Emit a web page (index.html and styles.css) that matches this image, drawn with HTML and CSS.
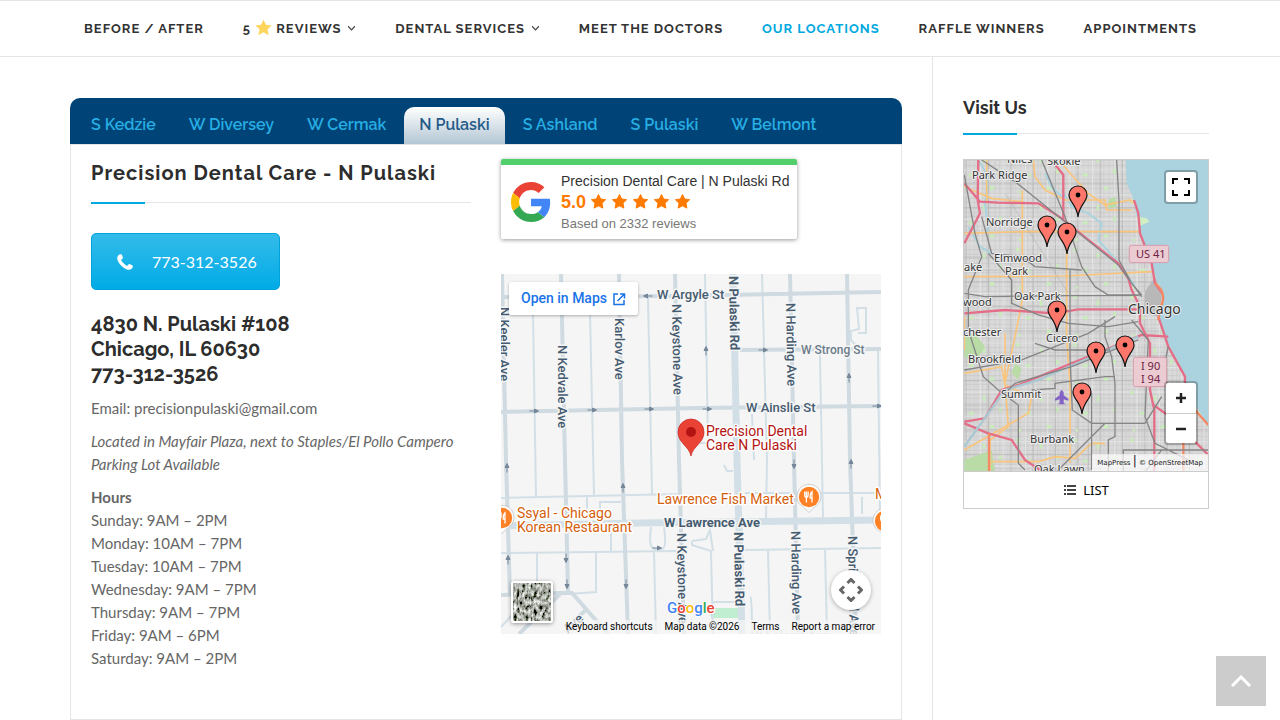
FILE: index.html
```html
<!DOCTYPE html>
<html lang="en">
<head>
<meta charset="utf-8">
<meta name="viewport" content="width=device-width, initial-scale=1">
<title>Precision Dental Care - Our Locations</title>
<link rel="stylesheet" href="styles.css">
</head>
<body>
<header class="site-header">
  <nav class="main-nav" aria-label="Main">
    <a href="#">Before / After</a>
    <a href="#">5 <svg class="nav-star" viewBox="0 0 16 16" aria-hidden="true"><path d="M8 0.6 10.3 5.5 15.7 6 11.7 9.7 12.9 15.2 8 12.4 3.1 15.2 4.3 9.7 0.3 6 5.7 5.5Z" fill="#fdd45c"/></svg> Reviews<svg class="caret" viewBox="0 0 8 6" aria-hidden="true"><path d="M1 1 4 4.2 7 1"/></svg></a>
    <a href="#">Dental Services<svg class="caret" viewBox="0 0 8 6" aria-hidden="true"><path d="M1 1 4 4.2 7 1"/></svg></a>
    <a href="#">Meet the Doctors</a>
    <a href="#" class="current">Our Locations</a>
    <a href="#">Raffle Winners</a>
    <a href="#">Appointments</a>
  </nav>
</header>

<div class="page">
  <main class="content">
    <div class="tabs" role="tablist">
      <button role="tab">S Kedzie</button>
      <button role="tab">W Diversey</button>
      <button role="tab">W Cermak</button>
      <button role="tab" class="active" aria-selected="true">N Pulaski</button>
      <button role="tab">S Ashland</button>
      <button role="tab">S Pulaski</button>
      <button role="tab">W Belmont</button>
    </div>
    <section class="panel" role="tabpanel">
      <div class="details">
        <h2 class="ruled location-title">Precision Dental Care - N Pulaski</h2>
        <a class="call" href="tel:7733123526">
          <svg viewBox="0 0 16 16" aria-hidden="true"><path d="M1.2 1.4C2 .5 3.600 0 4.300 .3 4.900.6 6 3.200 5.900 3.900 5.800 4.700 4.300 5.400 4.200 5.900 4.100 7 8.800 11.800 10.100 11.800 10.700 11.800 11.400 10.200 12.200 10.100 12.900 10 15.500 11.400 15.800 12 16.100 12.700 15.300 14.400 14.500 15 13.400 15.900 11.600 16.100 9.900 15.400 6 13.900 2 9.900.6 6.200 0 4.300.2 2.500 1.200 1.400Z" fill="#fff"/></svg>
          <span>773-312-3526</span>
        </a>
        <h3 class="address">4830 N. Pulaski #108<br>Chicago, IL 60630<br>773-312-3526</h3>
        <p>Email: precisionpulaski@gmail.com</p>
        <p><em>Located in Mayfair Plaza, next to Staples/El Pollo Campero Parking Lot Available</em></p>
        <p><strong>Hours</strong><br>Sunday: 9AM – 2PM<br>Monday: 10AM – 7PM<br>Tuesday: 10AM – 7PM<br>Wednesday: 9AM – 7PM<br>Thursday: 9AM – 7PM<br>Friday: 9AM – 6PM<br>Saturday: 9AM – 2PM</p>
      </div>

      <div class="aside-info">
        <div class="reviews">
          <svg class="g-logo" viewBox="0 0 48 48" aria-hidden="true">
            <path fill="#ea4335" d="M24 9.500c3.540 0 6.710 1.220 9.210 3.600l6.850-6.850C35.900 2.380 30.470 0 24 0 14.620 0 6.510 5.380 2.560 13.220l7.980 6.190C12.430 13.720 17.740 9.500 24 9.500z"/>
            <path fill="#4285f4" d="M46.980 24.550c0-1.570-.15-3.090-.38-4.550H24v9.020h12.940c-.58 2.960-2.260 5.480-4.780 7.180l7.730 6c4.510-4.180 7.090-10.360 7.090-17.650z"/>
            <path fill="#fbbc05" d="M10.530 28.590c-.48-1.450-.76-2.990-.76-4.590s.27-3.140.76-4.590l-7.980-6.190C.92 16.460 0 20.120 0 24c0 3.880.92 7.540 2.560 10.780l7.970-6.190z"/>
            <path fill="#34a853" d="M24 48c6.480 0 11.930-2.130 15.890-5.810l-7.730-6c-2.150 1.450-4.920 2.300-8.160 2.300-6.260 0-11.570-4.220-13.470-9.910l-7.980 6.190C6.510 42.620 14.620 48 24 48z"/>
          </svg>
          <div class="reviews-text">
            <div class="reviews-name">Precision Dental Care | N Pulaski Rd</div>
            <div class="rating"><b>5.0</b>
              <svg viewBox="0 0 101 17" aria-label="5 stars">
                <defs><path id="star" d="M8.500 1.500 10.700 6 15.600 6.700 12 10.200 12.900 15.100 8.500 12.800 4.100 15.100 5 10.200 1.400 6.700 6.300 6Z" fill="#ff7a00" stroke="#ff7a00" stroke-linejoin="round"/></defs>
                <use href="#star"/><use href="#star" x="21"/><use href="#star" x="42"/><use href="#star" x="63"/><use href="#star" x="84"/>
              </svg>
            </div>
            <div class="reviews-count">Based on 2332 reviews</div>
          </div>
        </div>

        <div class="street-map">
          <svg class="map-art" viewBox="501 274 380 360" preserveAspectRatio="xMidYMid slice">
            <defs>
              <g id="arrow"><path d="M-4.500 0H3M.5-2 4.500 0 .5 2Z" stroke="#76879a" stroke-width="1" fill="#76879a"/></g>
              <g id="food"><path d="M0 15.500-5.500 10A12 12 0 1 1 5.500 10Z" fill="#fff" stroke="#b7b7b7" stroke-width=".7"/><circle r="10.200" fill="#ff8126"/><path d="M-4.300-5.500V-2Q-4.300.2-2.600.2V5.500M-2.600-5.500V0M-.9-5.500V-2Q-.9.2-2.600.2M3 5.500V-5.200Q.8-3 1.200 1H3" stroke="#fff" stroke-width="1.300" fill="none"/></g>
              <filter id="aerial" x="0" y="0" width="100%" height="100%"><feTurbulence type="fractalNoise" baseFrequency=".35 .2" numOctaves="3" seed="5"/><feColorMatrix values="1.500 .8 0 0 -.76  1.500 .8 0 0 -.74  1.500 .8 0 0 -.78  0 0 0 0 1"/></filter>
            </defs>
            <path fill="#f5f5f5" d="M501 274h380v360H501z"/>
            <path d="M709 608h30v10h-28z" fill="#bfeed1"/>
            <g fill="none" stroke="#d3dfe6" stroke-width="2">
              <path d="M533 313 536 497M537 553V582M590 313 594 495M648 298 652 494M654 552 656 634M705 274 708 443M762 274 767 460 766 518M768 550 770 634M820 355 823 519M825 550 827 634M878 350 880 519M752 414 754 460M700 443H710M501 498 680 494M745 493H875M587 497V515M600 520V502H621M501 553 680 551M741 550 881 548M611 528V553M651 527Q648 549 655 549H662Q667 548 664 527M692 541 706 539 710 530 713 551M692 541V545L711 551 713 634M713 602H740M750 597Q752 596 752 634M596 553V592L568 594M862 497V514M724 465 727 471H733M858 333H866V308H857L859 329 851 331V340L858 348M501 627 512 615"/>
            </g>
            <g fill="none" stroke="#cfdae1" stroke-width="4">
              <path d="M501 297 680 296 881 292M740 350 881 349M501 412 700 408 881 406M502 274 506 460 510 595M561 274 565 460 568 593M619 274 622 460 628 634M675 274 679 460 684 634M790 274 794 460 798 634M847 274 850 460 856 634M501 595 560 593H572L608 634M560 594 519 634M588 608 566 628"/>
            </g>
            <g fill="none" stroke="#d3dfe6" stroke-width="7"><path d="M733 274 737 460 742 634M501 526 640 523 881 520"/></g>
            <g>
              <use href="#arrow" x="534" y="411"/><use href="#arrow" x="592" y="410"/><use href="#arrow" x="649" y="409"/><use href="#arrow" x="707" y="409"/><use href="#arrow" x="763" y="350"/><use href="#arrow" x="877" y="406"/><use href="#arrow" x="657" y="548"/><use href="#arrow" transform="translate(648 296) rotate(180)"/>
              <use href="#arrow" transform="translate(706 351) rotate(-90)"/><use href="#arrow" transform="translate(849 378) rotate(-90)"/><use href="#arrow" transform="translate(507 468) rotate(-90)"/><use href="#arrow" transform="translate(623 488) rotate(-90)"/><use href="#arrow" transform="translate(508 560) rotate(-90)"/><use href="#arrow" transform="translate(851 464) rotate(-90)"/>
              <use href="#arrow" transform="translate(566 558) rotate(90)"/><use href="#arrow" transform="translate(567 584) rotate(90)"/><use href="#arrow" transform="translate(626 584) rotate(90)"/><use href="#arrow" transform="translate(794 464) rotate(90)"/>
            </g>
            <g class="street-label">
              <text x="657" y="299">W Argyle St</text>
              <text x="801" y="354" class="faint">W Strong St</text>
              <text x="746" y="412">W Ainslie St</text>
              <text x="664" y="527" class="bold">W Lawrence Ave</text>
              <text x="751" y="640" class="ghost">W Leland Ave</text>
              <text transform="translate(500 307) rotate(90)">N Keeler Ave</text>
              <text transform="translate(558 345) rotate(90)">N Kedvale Ave</text>
              <text transform="translate(615 318) rotate(90)">Karlov Ave</text>
              <text transform="translate(672 304) rotate(89)">N Keystone Ave</text>
              <text transform="translate(729 276) rotate(89)" class="bold">N Pulaski Rd</text>
              <text transform="translate(786 303) rotate(89)">N Harding Ave</text>
              <text transform="translate(677 533) rotate(89)">N Keystone Ave</text>
              <text transform="translate(734 532) rotate(89)" class="bold">N Pulaski Rd</text>
              <text transform="translate(791 531) rotate(89)">N Harding Ave</text>
              <text transform="translate(848 536) rotate(89)">N Springfield Ave</text>
              <text transform="translate(568 634) rotate(-42)">Ave</text>
            </g>
            <g class="poi-label">
              <text x="657" y="504">Lawrence Fish Market</text>
              <text x="517" y="518">Ssyal - Chicago</text>
              <text x="517" y="532">Korean Restaurant</text>
              <text x="875" y="499">M</text>
              <g class="red"><text x="706" y="436">Precision Dental</text><text x="706" y="450">Care N Pulaski</text></g>
            </g>
            <use href="#food" x="809" y="497"/><use href="#food" x="502" y="518"/><use href="#food" x="885" y="521"/>
            <path d="M691 456C689 446 678 443 678 432A13 13 0 0 1 704 432C704 443 693 446 691 456Z" fill="#ea4335" stroke="#c5221f" stroke-width=".7"/><circle cx="691" cy="432" r="5" fill="#b31412"/>
            <rect x="512" y="582" width="40" height="40" filter="url(#aerial)"/>
            <g class="google-mark"><text x="667" y="613"><tspan fill="#4285f4">G</tspan><tspan fill="#ea4335">o</tspan><tspan fill="#fbbc05">o</tspan><tspan fill="#4285f4">g</tspan><tspan fill="#34a853">l</tspan><tspan fill="#ea4335">e</tspan></text></g>
          </svg>
          <a class="open-maps" href="#">Open in Maps <svg viewBox="0 0 14 14" aria-hidden="true"><path d="M6 2H2V12.500H12V8M8 2H12.500V6.500M12.500 2 5.500 9"/></svg></a>
          <button class="aerial-toggle" aria-label="Show satellite imagery"></button>
          <button class="camera" aria-label="Map camera controls"><svg viewBox="0 0 24 24" aria-hidden="true"><path d="M8.500 5 12 1.500 15.500 5M8.500 19 12 22.500 15.500 19M5 8.500 1.500 12 5 15.500M19 8.500 22.500 12 19 15.500"/></svg></button>
          <div class="map-legal"><a href="#">Keyboard shortcuts</a><span>Map data ©2026</span><a href="#">Terms</a><a href="#">Report a map error</a></div>
        </div>
      </div>
    </section>
  </main>

  <aside class="sidebar">
    <h3 class="ruled">Visit Us</h3>
    <div class="locator">
      <div class="city-map">
        <svg class="map-art" viewBox="964 160 244 311" preserveAspectRatio="xMidYMid slice">
          <defs>
            <pattern id="blocks" width="38" height="42" patternUnits="userSpaceOnUse"><path d="M0 5H38M0 19H38M0 31H38M6 0V42M20 0V42M29 0V42" stroke="#c6c6c6" stroke-width="2"/></pattern>
            <pattern id="avenues" width="67" height="74" patternUnits="userSpaceOnUse"><path d="M0 26H67M33 0V74" stroke="#b9b9b9" stroke-width="3"/><path d="M0 60H67M10 0V74" stroke="#ececec" stroke-width="2"/></pattern>
            <pattern id="greens" width="171" height="143" patternUnits="userSpaceOnUse"><path d="M12 8h12v9H12zM83 22h8v16h-8zM41 71h16v8H41zM132 58h9v12h-9zM104 110h14v10h-14zM20 122h7v8h-7z" fill="#c8ebb9"/></pattern>
            <g id="pin"><path d="M0 20C-1 8-9 5-9-2A9 9 0 0 1 9-2C9 5 1 8 0 20Z" fill="#ff776b" stroke="#111" stroke-width="1.200"/><circle cy="-2" r="2.400" fill="#000"/></g>
          </defs>
          <path fill="#dadada" d="M964 160h244v311H964z"/>
          <g transform="translate(955 150) scale(.3333)">
            <path fill="url(#blocks)" d="M20 20H780V980H20z"/><path fill="url(#avenues)" d="M20 20H780V980H20z"/><path fill="url(#greens)" d="M20 20H780V980H20z"/>
            <path d="M70 30 100 80 90 160 100 250M40 230 75 290 110 310M320 120 350 170 400 190 440 220 430 270 500 350 540 410M270 70 290 110 330 150" fill="none" stroke="#aad3df" stroke-width="6"/>
            <path d="M28 560 60 550 90 590 60 640 28 620M28 930 110 900 120 965H28M460 150 480 140 485 170 460 175M180 640 200 655 190 690 170 670" fill="#b9dca6"/>
            <path fill="#aad3df" d="M512 20 515 100 537 150 545 200 575 205 583 215 553 228 562 265 590 340 605 390 625 425 618 480 610 510 625 550 645 590 690 675 698 725 760 830 780 850V20Z"/>
            <path d="M545 200 575 205 583 215 553 228Z" fill="#d2eec4"/>
            <path d="M570 425 600 380 622 430 610 500 570 490Z" fill="#b8b8b8"/>
            <g fill="none" stroke="#f9c57c" stroke-width="5">
              <path d="M95 30V160M202 120V450L180 560 150 700 160 830 105 870V990M320 40 350 75 400 130 450 165 525 150 537 160M235 30 240 80 270 120 330 150H450L455 180H530M28 250 200 245H555M28 380 330 378 590 365M335 220V560L345 700 345 940M105 935H250L300 920 360 925 410 880 450 880M28 110 110 145 200 155M28 670 140 650 150 705 230 740 220 790 28 900M150 550V690M28 500V600"/>
            </g>
            <g fill="none" stroke="#e46d87" stroke-width="7">
              <path d="M70 30 68 150 75 190 28 280M28 100 75 155 130 158 250 160 320 205 400 270 490 340 520 385 530 420 555 470V520L585 580V720L598 780V990M290 30 325 75V210M28 490 150 480 300 490 370 478H550M28 815 90 805 140 720 190 705 350 640 450 600 560 555 640 560M28 820 100 850 170 870 210 930 300 990M537 150 550 190 555 250 590 340 600 400 622 430M610 500 640 590 690 680V730M595 765 645 800 760 915"/>
            </g>
            <path d="M600 400Q640 430 615 475L610 510M685 850V990M720 780 760 825M102 850V990" fill="none" stroke="#f28a67" stroke-width="7"/>
            <path d="M28 890 150 720 250 690 550 560" fill="none" stroke="#aac8d2" stroke-width="7"/>
            <g fill="none" stroke="#858585" stroke-width="4">
              <path d="M80 30 180 95 330 215 490 345 560 440M28 75 60 250 80 320 40 420V540L85 680 130 720 190 765V940L210 960M260 30 330 200 380 350 420 410 460 435H560M485 30 492 150V330L530 400 560 435M28 430 90 440 330 437 550 436M345 360V620L352 780 410 820H570L620 740M28 660 200 630 400 550 480 500M100 310 170 390V460L250 495 340 520 460 530 550 515M450 510V560L470 620 480 700V860L460 870V990M230 720 300 715V700L450 680H480M80 200 110 310 200 320 240 350 380 360M240 580 300 600H460M150 730 180 700 350 650 550 570M640 590 620 680 690 760M560 980 620 900 760 900M410 730V960M530 510 580 570 570 800 600 880 700 930M505 990V900H640M300 970 450 820"/>
            </g>
            <path d="M28 780 350 780M28 360 550 360M400 550V990M150 130 340 430" stroke="#999" stroke-width="1"/>
            <g fill="#ecccd3" stroke="#d79bad" stroke-width="3"><rect x="523" y="286" width="118" height="52" rx="7"/><rect x="535" y="622" width="100" height="88" rx="7"/></g>
            <path d="M320 719 326 727V736L340 746V752L326 748V758L331 763H309L314 758V748L300 752V746L314 736V727Z" fill="#8461c4"/>
          </g>
          <g class="place-label">
            <text x="1007" y="163">Niles</text><text x="1047" y="165">Skokie</text><text x="972" y="179">Park Ridge</text><text x="986" y="226">Norridge</text><text x="994" y="262">Elmwood</text><text x="1005" y="275">Park</text><text x="964" y="271">ake</text><text x="963" y="306">wood</text><text x="1014" y="300">Oak Park</text><text x="1046" y="342">Cicero</text><text x="963" y="336">chester</text><text x="968" y="363">Brookfield</text><text x="1001" y="398">Summit</text><text x="1030" y="443">Burbank</text><text x="1034" y="473">Oak Lawn</text>
            <text x="1128" y="314" class="city">Chicago</text>
            <g class="shield"><text x="1136" y="258">US 41</text><text x="1141" y="370">I 90</text><text x="1141" y="383">I 94</text></g>
          </g>
          <use href="#pin" x="1078" y="197"/><use href="#pin" x="1047" y="227"/><use href="#pin" x="1067" y="234"/><use href="#pin" x="1057" y="312"/><use href="#pin" x="1125" y="347"/><use href="#pin" x="1096" y="353"/><use href="#pin" x="1082" y="394"/>
        </svg>
        <button class="fullscreen" aria-label="Full screen"><svg viewBox="0 0 18 18" aria-hidden="true"><path d="M1 6V1H6M12 1H17V6M17 12V17H12M6 17H1V12"/></svg></button>
        <div class="zoom"><button aria-label="Zoom in"><svg viewBox="0 0 12 12" aria-hidden="true"><path d="M1 6H11M6 1V11"/></svg></button><button aria-label="Zoom out"><svg viewBox="0 0 12 12" aria-hidden="true"><path d="M1 6H11"/></svg></button></div>
        <div class="credits"><a href="#">MapPress</a> <span>|</span> <a href="#">© OpenStreetMap</a></div>
      </div>
      <button class="list-button"><svg viewBox="0 0 14 12" aria-hidden="true"><path d="M1 2H3M1 6H3M1 10H3M4 2H13M4 6H13M4 10H13"/></svg>LIST</button>
    </div>
  </aside>
</div>
<button class="to-top" aria-label="Back to top"><svg viewBox="0 0 20 12" aria-hidden="true"><path d="M1 11 10 2 19 11"/></svg></button>
</body>
</html>
```
FILE: styles.css
```css
* { box-sizing: border-box; }
body {
  margin: 0;
  min-height: 100vh;
  display: flex;
  flex-direction: column;
  background: #fff;
  color: #666;
  font: 15px/23px Lato, sans-serif;
}
a { color: inherit; text-decoration: none; }
button { border: 0; padding: 0; cursor: pointer; }
h2, h3, p { margin: 0; }

.site-header { border-top: 1px solid #e5e5e5; border-bottom: 1px solid #e5e5e5; }
.main-nav {
  display: flex;
  justify-content: space-between;
  max-width: 1140px;
  margin: 0 auto;
  padding: 0 13px 0 14px;
  font: 700 13px/55px Raleway, Lato, sans-serif;
  letter-spacing: 1px;
  text-transform: uppercase;
  white-space: nowrap;
  color: #333;
}
.main-nav .current { color: #00a9e0; }
.nav-star { width: 17px; height: 17px; vertical-align: -3px; }
.caret { width: 9px; height: 7px; margin-left: 6px; vertical-align: 1px; fill: none; stroke: #444; }

.page {
  flex: 1;
  display: flex;
  width: 100%;
  max-width: 1140px;
  margin: 0 auto;
}
.content {
  flex: 1;
  display: flex;
  flex-direction: column;
  min-width: 0;
  padding: 41px 30px 0 0;
  border-right: 1px solid #e5e5e5;
}
.tabs {
  display: flex;
  gap: 3px;
  padding: 9px 6px 0;
  background: #004376;
  border-radius: 10px 10px 0 0;
}
.tabs button {
  height: 37px;
  padding: 0 15px 2px;
  background: none;
  border-radius: 10px 10px 0 0;
  color: #26aee4;
  font: 600 16px/35px Raleway, Lato, sans-serif;
  white-space: nowrap;
}
.tabs .active { background: linear-gradient(#fff, #b3c6d4); color: #245a88; }
.panel {
  flex: 1;
  display: grid;
  grid-template-columns: 1fr 1fr;
  gap: 30px;
  padding: 14px 20px 30px;
  border: 1px solid #e5e5e5;
}
.ruled {
  position: relative;
  border-bottom: 1px solid #e5e5e5;
  color: #2d2d2d;
  font-family: Raleway, Lato, sans-serif;
}
.ruled::after {
  content: "";
  position: absolute;
  left: 0;
  bottom: -2px;
  width: 54px;
  height: 2px;
  background: #00a9e0;
}
.location-title {
  padding-bottom: 15px;
  margin-bottom: 30px;
  font-size: 20px;
  line-height: 28px;
  font-weight: 700;
  letter-spacing: 1px;
  white-space: nowrap;
}
.call {
  display: inline-flex;
  align-items: center;
  gap: 19px;
  height: 57px;
  padding: 0 22px 0 25px;
  border: 1px solid #00a2dc;
  border-radius: 5px;
  background: linear-gradient(#34bbea, #00abe6);
  color: #fff;
  font-size: 16px;
}
.call svg { width: 16px; height: 16px; }
.address {
  margin: 22px 0 10px;
  color: #2d2d2d;
  font: 700 20px/25px Raleway, Lato, sans-serif;
}
.details p { margin-bottom: 10px; }

.reviews {
  display: flex;
  align-items: center;
  gap: 10px;
  width: 296px;
  height: 80px;
  margin-bottom: 35px;
  padding: 0 0 0 10px;
  border-top: 6px solid #50cf6a;
  border-radius: 2px;
  box-shadow: 0 1px 4px rgba(0, 0, 0, .4);
  font-family: "Liberation Sans", sans-serif;
}
.g-logo { width: 40px; height: 40px; }
.reviews-text { white-space: nowrap; }
.reviews-name { color: #333; font-size: 14px; line-height: 20px; }
.rating { display: flex; align-items: center; gap: 4px; color: #ff7a00; font-size: 18px; line-height: 22px; }
.rating svg { width: 101px; height: 17px; }
.reviews-count { color: #777; font-size: 13px; line-height: 21px; }

.street-map { position: relative; height: 360px; overflow: hidden; font-family: Roboto, sans-serif; }
.map-art { display: block; width: 100%; height: 100%; }
.street-label text, .poi-label text, .place-label text { paint-order: stroke; stroke-linejoin: round; }
.street-label text { font: 500 13px Roboto, sans-serif; fill: #455b70; stroke: #f5f5f5; stroke-width: 3px; }
.street-label .bold { font-weight: 700; }
.street-label .faint { font-size: 12px; fill: #6c7c8b; }
.street-label .ghost { fill: #c3c9cf; }
.poi-label text { font: 400 14px Roboto, sans-serif; fill: #d5600c; stroke: #fff; stroke-width: 3px; }
.poi-label .red text { fill: #b31412; }
.google-mark text { font: 500 15px Roboto, sans-serif; stroke: #fff; stroke-width: 2px; paint-order: stroke; }
.open-maps {
  position: absolute;
  left: 8px;
  top: 8px;
  display: flex;
  align-items: center;
  gap: 5px;
  height: 33px;
  padding: 0 12px;
  background: #fff;
  border-radius: 2px;
  box-shadow: 0 1px 3px rgba(0, 0, 0, .3);
  color: #1a73e8;
  font-size: 14px;
  font-weight: 500;
}
.open-maps svg { width: 14px; height: 14px; fill: none; stroke: #1a73e8; stroke-width: 1.5; }
.aerial-toggle {
  position: absolute;
  left: 10px;
  bottom: 11px;
  width: 42px;
  height: 42px;
  background: none;
  border: 2px solid #fff;
  border-radius: 3px;
  box-shadow: 0 1px 4px rgba(0, 0, 0, .4);
}
.camera {
  position: absolute;
  right: 10px;
  bottom: 24px;
  display: grid;
  place-items: center;
  width: 40px;
  height: 40px;
  border-radius: 50%;
  background: #fff;
  box-shadow: 0 1px 4px rgba(0, 0, 0, .3);
}
.camera svg { width: 24px; height: 24px; fill: none; stroke: #666; stroke-width: 3; }
.map-legal {
  position: absolute;
  right: 0;
  bottom: 0;
  display: flex;
  gap: 12px;
  padding: 0 6px 0 5px;
  background: rgba(245, 245, 245, .75);
  color: #000;
  font-size: 10px;
  line-height: 14px;
  white-space: nowrap;
}

.sidebar { width: 277px; padding: 37px 1px 0 30px; }
.sidebar .ruled { margin-bottom: 25px; padding-bottom: 11px; font-size: 18px; font-weight: 700; line-height: 28px; }
.locator { border: 1px solid #ccc; }
.city-map { position: relative; height: 311px; overflow: hidden; }
.place-label text { font: 11px "Noto Sans", sans-serif; fill: #333; stroke: #eee; stroke-width: 2px; }
.place-label .city { font-size: 14px; }
.place-label .shield text { fill: #6d2043; stroke: none; }
.fullscreen, .zoom {
  position: absolute;
  right: 10px;
  border: 2px solid rgba(0, 0, 0, .25);
  border-radius: 4px;
  background: #fff;
  background-clip: padding-box;
}
.fullscreen { top: 10px; display: grid; place-items: center; width: 34px; height: 34px; }
.fullscreen svg { width: 18px; height: 18px; fill: none; stroke: #000; stroke-width: 2; }
.zoom { bottom: 26px; width: 34px; }
.zoom button { display: grid; place-items: center; width: 30px; height: 30px; background: none; }
.zoom button + button { border-top: 1px solid #ccc; }
.zoom svg { width: 12px; height: 12px; stroke: #222; stroke-width: 2.5; }
.credits {
  position: absolute;
  right: 0;
  bottom: 0;
  padding: 0 5px;
  background: rgba(255, 255, 255, .7);
  color: #222;
  font: 7px/15px "DejaVu Sans", sans-serif;
}
.credits span { font-size: 12px; }
.list-button {
  display: flex;
  align-items: center;
  justify-content: center;
  gap: 6px;
  width: 100%;
  height: 37px;
  border-top: 1px solid #ccc;
  background: #fff;
  color: #000;
  font: 13px "Noto Sans", sans-serif;
}
.list-button svg { width: 14px; height: 12px; stroke: #444; stroke-width: 2; }
.to-top {
  position: fixed;
  right: 14px;
  bottom: 14px;
  display: grid;
  place-items: center;
  width: 50px;
  height: 50px;
  background: #ccc;
}
.to-top svg { width: 20px; height: 12px; fill: none; stroke: #fff; stroke-width: 3; }
```
